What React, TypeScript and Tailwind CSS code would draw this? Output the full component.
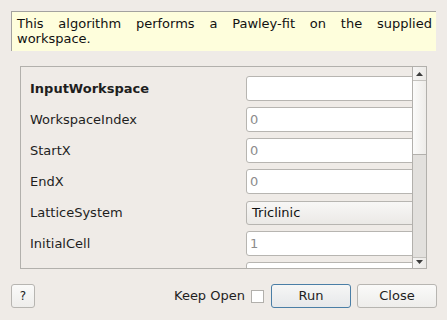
import React from "react";

const rows: { label: string; value: string; bold?: boolean; placeholder?: boolean; combo?: boolean }[] = [
  { label: "InputWorkspace", value: "", bold: true },
  { label: "WorkspaceIndex", value: "0", placeholder: true },
  { label: "StartX", value: "0", placeholder: true },
  { label: "EndX", value: "0", placeholder: true },
  { label: "LatticeSystem", value: "Triclinic", combo: true },
  { label: "InitialCell", value: "1", placeholder: true },
  { label: "", value: "" },
];

export default function App() {
  return (
    <div
      className="w-[447px] h-[320px] bg-[#efebe7] flex flex-col text-[13px] text-[#1e1e1e] overflow-hidden"
      style={{ fontFamily: '"DejaVu Sans", "Liberation Sans", sans-serif' }}
    >
      <div className="mt-[11px] ml-[11px] w-[425px] h-[40px] bg-[#fefedc] border-t border-l border-[#a3a29f] pl-[5px] pr-[4px] pt-[4px] leading-[15px] text-justify text-[#111]">
        This algorithm performs a Pawley-fit on the supplied workspace.
      </div>

      <div className="mt-[15px] ml-[20px] w-[407px] h-[203px] border border-[#b2b0ac] flex">
        <div className="flex-1 overflow-hidden pt-[9px]">
          {rows.map((r, i) => (
            <div key={i} className="flex items-center h-[25px] mb-[6px]">
              <div className={`w-[225px] pl-[9px] shrink-0 ${r.bold ? "font-bold" : ""}`}>{r.label}</div>
              {r.combo ? (
                <div className="h-[24px] w-[220px] shrink-0 rounded-[3px] border border-[#b7b5b1] bg-gradient-to-b from-[#f8f7f6] to-[#ebe9e6] pl-[5px] flex items-center text-[#111]">
                  {r.value}
                </div>
              ) : (
                <div className="h-[25px] w-[220px] shrink-0 rounded-[3px] border border-[#b7b5b1] bg-white pl-[3px] flex items-center text-[#8c8c8c]">
                  {r.value}
                </div>
              )}
            </div>
          ))}
        </div>
        <div className="w-[14px] border-l border-[#b2b0ac] flex flex-col bg-[#e2e0dd]">
          <div className="h-[14px] bg-gradient-to-r from-[#f6f5f4] to-[#eceae7] border-b border-[#c4c2be] flex items-center justify-center">
            <svg width="7" height="4" viewBox="0 0 7 4">
              <polygon points="0,4 7,4 3.5,0" fill="#3c3c3c" />
            </svg>
          </div>
          <div className="h-[74px] bg-gradient-to-r from-[#fbfbfa] to-[#eeece9] border-b border-[#b2b0ac]" />
          <div className="flex-1" />
          <div className="h-[11px] bg-gradient-to-r from-[#f6f5f4] to-[#eceae7] border-t border-[#c4c2be] flex items-start justify-center pt-[2px]">
            <svg width="7" height="4" viewBox="0 0 7 4">
              <polygon points="0,0 7,0 3.5,4" fill="#3c3c3c" />
            </svg>
          </div>
        </div>
      </div>

      <div className="mt-[15px] flex items-center h-[24px]">
        <div className="ml-[11px] w-[24px] h-[24px] rounded-[3px] border border-[#b7b5b1] bg-gradient-to-b from-[#fafaf9] to-[#eeedeb] flex items-center justify-center text-[12px] text-[#222]">
          ?
        </div>
        <div className="ml-[139px] text-[#1e1e1e]">Keep Open</div>
        <div className="ml-[6px] w-[13px] h-[13px] border border-[#b2b0ac] bg-white" />
        <div className="ml-[7px] w-[80px] h-[24px] rounded-[3px] border border-[#4a7ea6] bg-gradient-to-b from-[#f6f6f5] to-[#e6e8ea] flex items-center justify-center">
          Run
        </div>
        <div className="ml-[6px] w-[80px] h-[24px] rounded-[3px] border border-[#b7b5b1] bg-gradient-to-b from-[#fafaf9] to-[#eeedeb] flex items-center justify-center">
          Close
        </div>
      </div>
    </div>
  );
}
